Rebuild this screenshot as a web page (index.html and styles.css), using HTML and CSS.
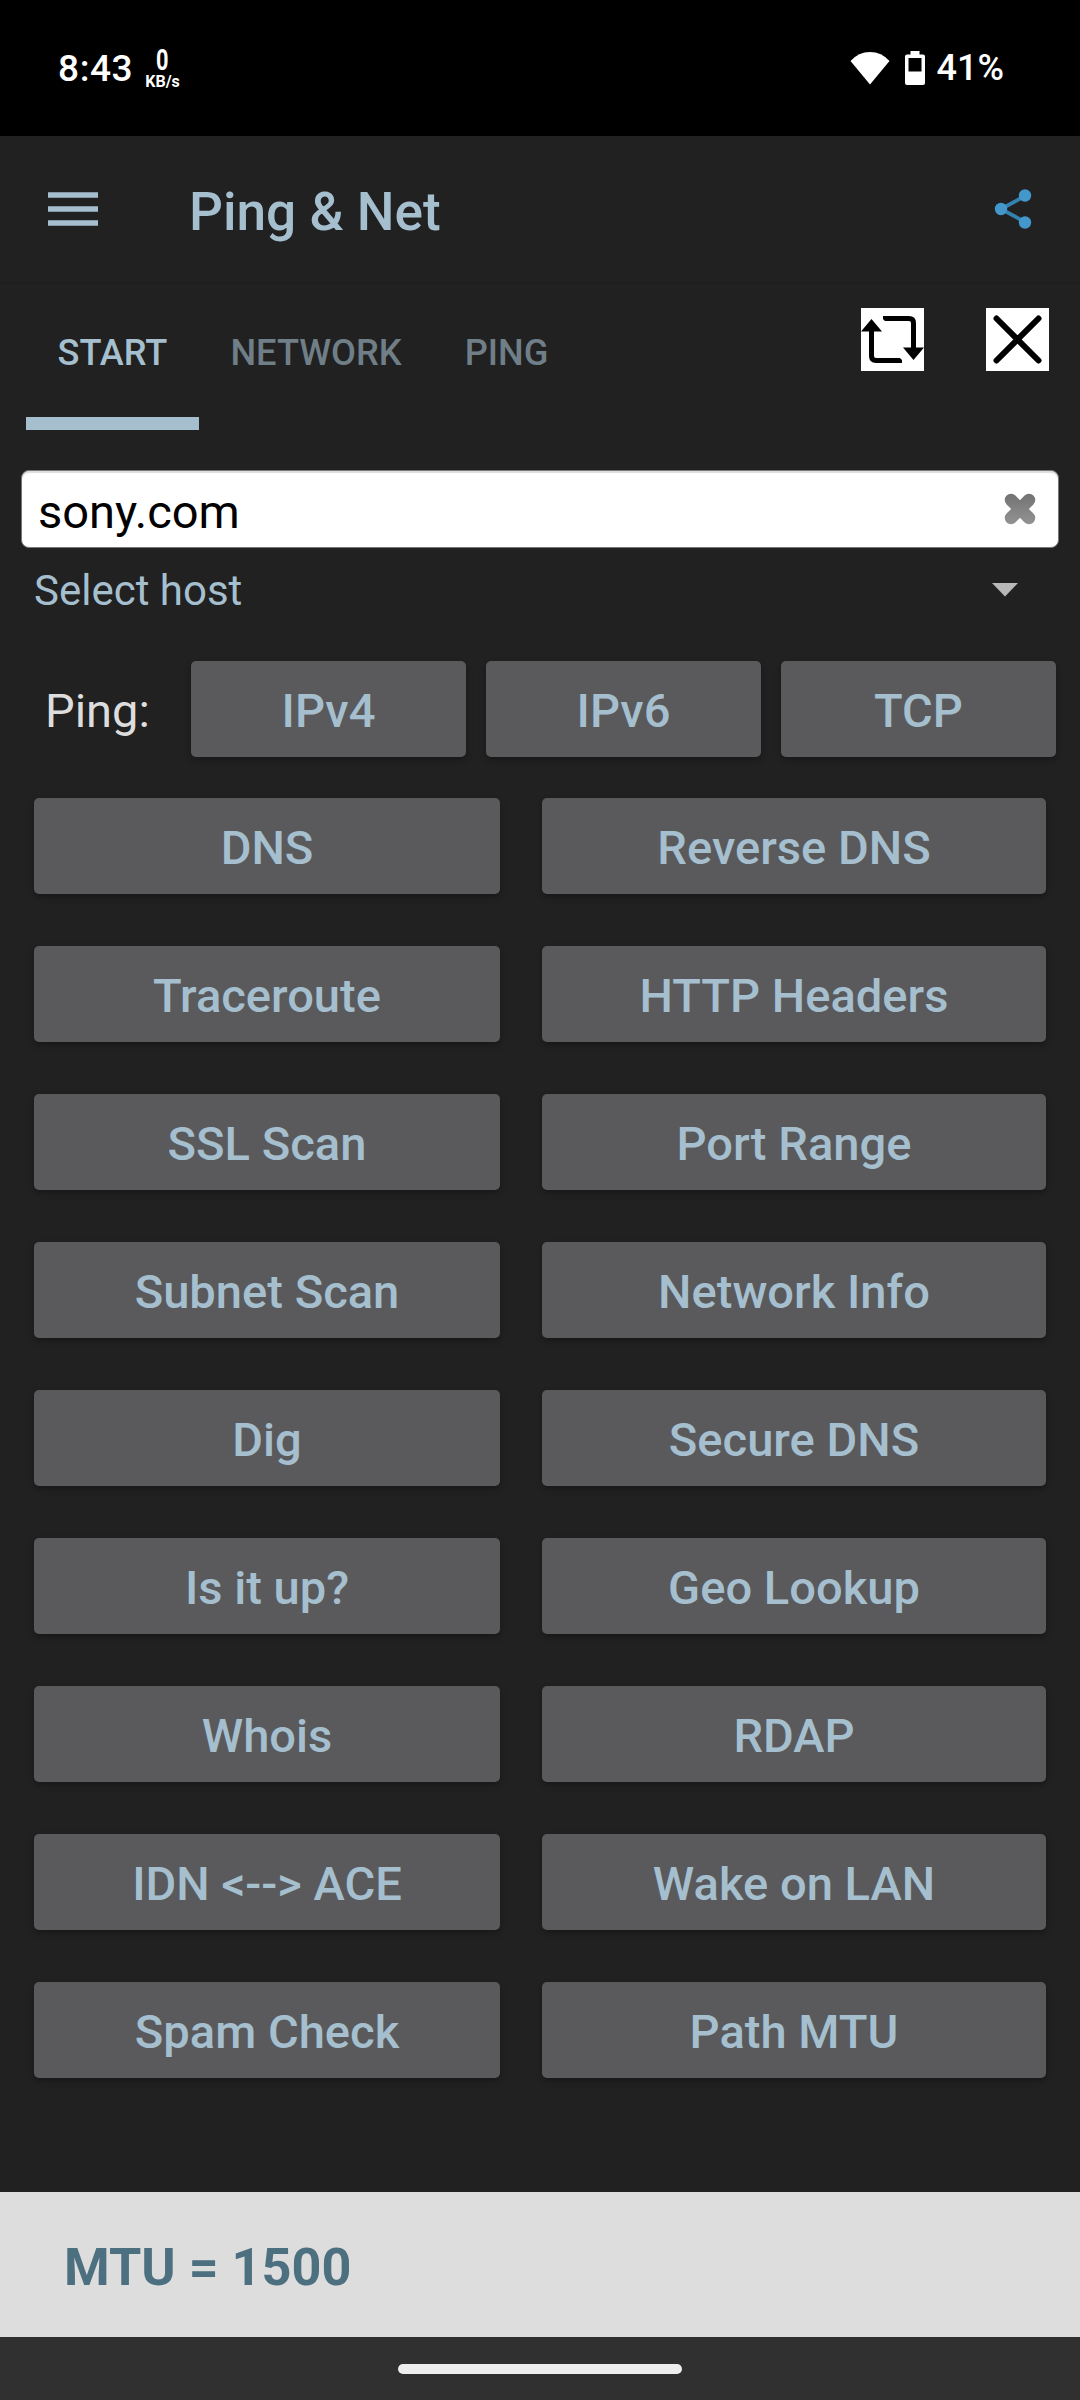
FILE: index.html
```html
<!DOCTYPE html>
<html lang="en">
<head>
  <meta charset="UTF-8" />
  <meta name="viewport" content="width=device-width, initial-scale=1.0" />
  <title>Ping &amp; Net</title>
  <link rel="stylesheet" href="styles.css">
</head>
<body>
  <div class="status-bar">
    <span class="time">8:43</span>
    <div class="speed">
      <span class="speed-value">0</span>
      <span class="speed-unit">KB/s</span>
    </div>
    <svg class="wifi" viewBox="0 0 40 34"><path d="M20 33.500L0.500 10Q8.500 1 20 1T39.500 10Z" fill="#fff"/></svg>
    <svg class="battery" viewBox="0 0 20 34"><path fill="#fff" fill-rule="evenodd" d="M5.500 0H14.500V3.500H18Q20 3.500 20 5.500V32Q20 34 18 34H2Q0 34 0 32V5.500Q0 3.500 2 3.500H5.500ZM3.500 7V20.500H16.500V7Z"/></svg>
    <span class="percent">41%</span>
  </div>

  <header class="app-bar">
    <svg class="menu" viewBox="0 0 50 34"><path d="M0 3H50M0 17H50M0 31H50" stroke="#a5bfcf" stroke-width="5.600"/></svg>
    <h1>Ping &amp; Net</h1>
    <svg class="share" viewBox="0 0 38 40"><path d="M31 7L7 20L31 33" fill="none" stroke="#3382b0" stroke-width="3.800"/><g fill="#4397cb"><circle cx="7" cy="20" r="6.200"/><circle cx="31" cy="6.500" r="6.200"/><circle cx="31" cy="33.500" r="6.200"/></g></svg>
  </header>

  <nav class="tabs">
    <a class="tab active">START</a>
    <a class="tab">NETWORK</a>
    <a class="tab">PING</a>
    <div class="tools">
      <svg viewBox="0 0 63 63"><g fill="none" stroke="#000" stroke-width="5"><path d="M22 10.500H48Q52.500 10.500 52.500 15V42"/><path d="M41 52.500H15Q10.500 52.500 10.500 48V21"/></g><path d="M10.500 11L21 23.500H0ZM52.500 52L42 39.500H63Z"/><path d="M18 7L25 14H18ZM45 56L38 49H45Z" fill="#fff"/></svg>
      <svg viewBox="0 0 63 63"><path d="M10.500 10.500L52.500 52.500M52.500 10.500L10.500 52.500" stroke="#000" stroke-width="6" stroke-linecap="round"/></svg>
    </div>
  </nav>

  <main>
    <div class="host-field">
      <span>sony.com</span>
      <svg class="clear" viewBox="0 0 36 36"><defs><linearGradient id="grey" x1="0" y1="0" x2="0" y2="36" gradientUnits="userSpaceOnUse"><stop offset="0" stop-color="#6f6f6f"/><stop offset="1" stop-color="#969696"/></linearGradient></defs><path d="M9 9L27 27M27 9L9 27" stroke="url(#grey)" stroke-width="12.500" stroke-linecap="round"/></svg>
    </div>
    <div class="host-select">
      <span>Select host</span>
      <svg class="arrow" viewBox="0 0 26 14"><path d="M0 0H26L13 13.500Z" fill="#b8b8b8"/></svg>
    </div>

    <div class="ping-row">
      <span>Ping:</span>
      <button>IPv4</button>
      <button>IPv6</button>
      <button>TCP</button>
    </div>

    <div class="actions">
      <button>DNS</button>
      <button>Reverse DNS</button>
      <button>Traceroute</button>
      <button>HTTP Headers</button>
      <button>SSL Scan</button>
      <button>Port Range</button>
      <button>Subnet Scan</button>
      <button>Network Info</button>
      <button>Dig</button>
      <button>Secure DNS</button>
      <button>Is it up?</button>
      <button>Geo Lookup</button>
      <button>Whois</button>
      <button>RDAP</button>
      <button>IDN &lt;--&gt; ACE</button>
      <button>Wake on LAN</button>
      <button>Spam Check</button>
      <button>Path MTU</button>
    </div>
  </main>

  <footer>MTU = 1500</footer>
  <div class="gesture-bar"><span class="pill"></span></div>
</body>
</html>
```
FILE: styles.css
```css
* { margin: 0; padding: 0; box-sizing: border-box; }
body { width: 1080px; height: 2400px; display: flex; flex-direction: column; overflow: hidden; background: #212121; color: #a5bfcf; font-family: Roboto, sans-serif; }
svg { display: block; flex: none; }

.status-bar { height: 136px; display: flex; align-items: center; padding: 0 76px 0 58px; background: #000; color: #fff; }
.time { font-size: 37px; font-weight: 500; letter-spacing: 0.6px; }
.speed { display: flex; flex-direction: column; align-items: center; margin: 2px 0 0 12px; font-weight: 700; }
.speed-value { font-size: 29px; line-height: 25px; transform: scaleX(0.75); }
.speed-unit { font-size: 16px; line-height: 17px; }
.wifi { width: 40px; height: 34px; margin-left: auto; }
.battery { width: 20px; height: 34px; margin: 0 12px 0 15px; }
.percent { font-size: 36px; font-weight: 500; }

.app-bar { height: 148px; display: flex; align-items: center; padding: 0 48px; border-bottom: 2px solid #1e1e1e; }
.menu { width: 50px; height: 34px; }
.app-bar h1 { margin-left: 91px; padding-top: 6px; font-size: 53.2px; font-weight: 500; line-height: 64px; }
.share { width: 38px; height: 40px; margin-left: auto; }

.tabs { height: 146px; display: flex; padding-left: 26px; }
.tab { padding: 0 31.5px; border-bottom: 13px solid transparent; color: #6f7e87; font-size: 36.2px; font-weight: 500; line-height: 137px; }
.tab.active { color: #a5bfcf; border-color: #a5bfcf; }
.tools { display: flex; gap: 62px; margin: 24px 31px 0 auto; }
.tools svg { width: 63px; height: 63px; background: #fff; }

/* tall tab line-height must not push the indicator down */
.tab { height: 146px; }

main { flex: 1; padding-top: 40px; }
.host-field { height: 78px; display: flex; align-items: center; justify-content: space-between; margin: 0 21px; padding: 0 20px 0 16px; background: #fff; border: 1px solid #777; border-radius: 8px; color: #000; font-size: 47px; box-shadow: inset 0 2px 1px #ddd; }
.host-field span { padding-top: 4px; }
.clear { width: 36px; height: 36px; }
.host-select { height: 84px; display: flex; align-items: center; justify-content: space-between; padding: 0 62px 0 34px; font-size: 42px; }
.arrow { width: 26px; height: 14px; }

button { height: 96px; border: none; border-radius: 5px; background: #5a5a5c; color: #a5bfcf; font: 500 47.1px/96px Roboto, sans-serif; padding-top: 2px; box-shadow: 0 3px 6px rgba(0,0,0,0.28); }
.ping-row { height: 96px; display: grid; grid-template-columns: 126px repeat(3, 275px); gap: 20px; margin: 29px 24px 0 45px; color: #ddd; font-size: 47px; line-height: 99px; }
.actions { display: grid; grid-template-columns: 466px 504px; gap: 52px 42px; margin: 41px 34px 0; }

footer { height: 145px; padding-left: 64px; background: #ddd; color: #4c7080; font-size: 52.2px; font-weight: 700; line-height: 151px; }
.gesture-bar { height: 63px; display: flex; justify-content: center; padding-top: 27px; background: #303030; }
.pill { width: 284px; height: 10px; border-radius: 5px; background: #eee; }
```
